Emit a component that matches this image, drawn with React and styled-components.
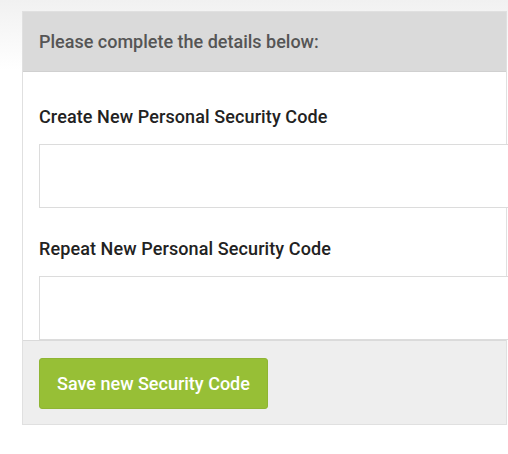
import React from "react";
import styled, { createGlobalStyle } from "styled-components";

const Global = createGlobalStyle`
  html, body { margin: 0; padding: 0; }
  body {
    width: 508px;
    height: 454px;
    overflow: hidden;
    background: linear-gradient(180deg, #f1f1f1 0px, #f7f7f7 30px, #ffffff 70px);
    font-family: Roboto, "Liberation Sans", Arial, sans-serif;
  }
`;

const Page = styled.div`
  padding: 11px 0 0 22px;
`;

const Card = styled.form`
  width: 485px;
  box-sizing: border-box;
  border: 1px solid #e0e0e0;
  background: #fff;
`;

const Header = styled.div`
  height: 59px;
  background: #dadada;
  border-bottom: 1px solid #d0d0d0;
  display: flex;
  align-items: center;
  padding-left: 16px;
  font-size: 18px;
  font-weight: 500;
  color: #555;
`;

const Body = styled.div`
  padding: 0 0 0 16px;
`;

const Label = styled.label`
  display: block;
  margin-top: ${(p) => p.$top}px;
  margin-bottom: 17px;
  line-height: 20px;
  font-size: 18px;
  font-weight: 500;
  letter-spacing: 0.1px;
  color: #222;
`;

const Input = styled.input`
  display: block;
  width: 490px;
  height: 64px;
  box-sizing: border-box;
  border: 1px solid #dcdcdc;
  background: #fff;
  margin: 0;
  outline: none;
`;

const Footer = styled.div`
  background: #eeeeee;
  border-top: 1px solid #dadada;
  padding: 17px 16px 15px;
`;

const Button = styled.button`
  width: 229px;
  height: 51px;
  border: 1px solid #8fb534;
  border-radius: 3px;
  background: #97bf36;
  color: #fff;
  font-family: inherit;
  font-size: 18px;
  font-weight: 500;
  cursor: pointer;
`;

export default function App() {
  return (
    <>
      <Global />
      <Page>
        <Card onSubmit={(e) => e.preventDefault()}>
          <Header>Please complete the details below:</Header>
          <Body>
            <Label $top={35} htmlFor="c1">Create New Personal Security Code</Label>
            <Input id="c1" type="password" />
            <Label $top={31} htmlFor="c2">Repeat New Personal Security Code</Label>
            <Input id="c2" type="password" />
          </Body>
          <Footer>
            <Button type="submit">Save new Security Code</Button>
          </Footer>
        </Card>
      </Page>
    </>
  );
}
